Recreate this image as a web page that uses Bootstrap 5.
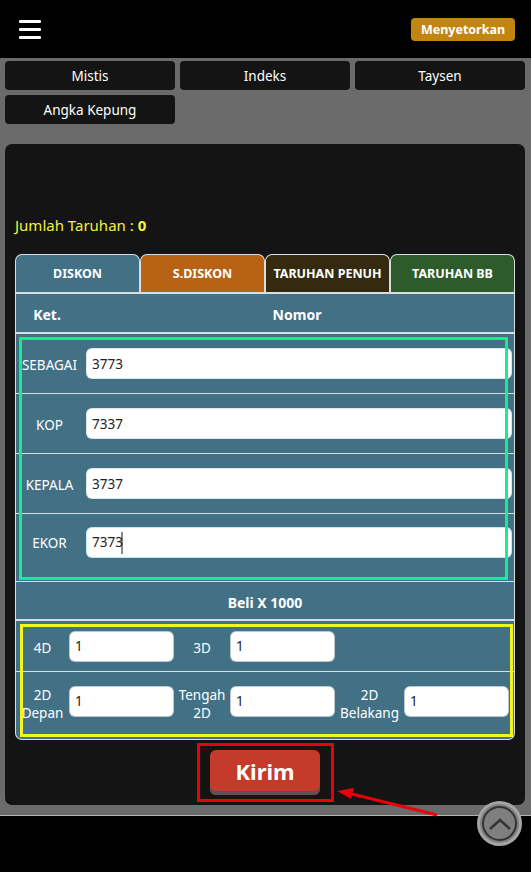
<!DOCTYPE html>
<html lang="id">
<head>
<meta charset="utf-8">
<title>Kirim</title>
<link href="https://cdn.jsdelivr.net/npm/bootstrap@5.3.0/dist/css/bootstrap.min.css" rel="stylesheet">
<style>
html,body{height:872px;overflow:hidden}
body{background:#000;font-family:"Noto Sans","Open Sans","Liberation Sans",sans-serif;font-size:14px;color:#fff;position:relative}
.top-bar{height:58px;background:#000;padding:0 16px 0 19px}
.burger{width:22px;display:flex;flex-direction:column;gap:5px;padding:0;border:0;background:none}
.burger span{display:block;height:3px;background:#fff;border-radius:1px}
.depo{background:#c1860f;color:#fff;font-size:12.5px;font-weight:700;line-height:23px;height:23px;width:104px;padding:0;border-radius:4px;border:0}
.stage{height:758px;background:#6b6b6b;border-bottom:1px solid #b5b5b5;padding:3px 6px 0 5px}
.game-grid{display:grid;grid-template-columns:repeat(3,170px);column-gap:5px;row-gap:5px}
.game-btn{background:#141414;color:#fff;height:29px;line-height:31px;border-radius:4px;text-align:center;font-size:13.5px;border:0;padding:0}
.panel{margin-top:20px;background:#141414;border-radius:7px;height:661px;padding:69px 10px 0 10px}
.total{color:#f2f23c;font-size:15px;line-height:24px;height:41px;margin-bottom:0}
.sheet{width:500px;background:#427186;border:1px solid #d8dee2;border-top:0;border-radius:0 0 7px 7px}
.tab-row{display:grid;grid-template-columns:repeat(4,1fr);height:40px;margin:0 -1px;background:#141414}
.tab-cell{display:flex;align-items:center;justify-content:center;font-size:12.5px;font-weight:700;border:1px solid #d8dee2;border-bottom:2px solid #d8dee2;border-radius:7px 7px 0 0;padding-top:2px;white-space:nowrap}
.t-a{background:#427186}.t-b{background:#b86216}.t-c{background:#352a10}.t-d{background:#2d5c2a}
.line-head{height:40px;display:flex;align-items:center;font-weight:700;font-size:14px;border-bottom:2px solid #d8dee2;padding-top:3px}
.line-head .lbl{width:62px;text-align:center}
.line-head .mid{flex:1;text-align:center;padding-left:2px}
.num-row{height:60px;display:flex;align-items:center;border-bottom:1px solid #d8dee2}
.num-row.last{height:68px;padding-bottom:11px}
.num-row .lbl{width:67px;margin-right:4px;padding-top:3px;text-align:center;font-size:13.5px;flex:none}
.field{background:#fff;color:#222;border:0;border-radius:5px;height:29px;width:424px;padding:0 5px;font-size:13.5px;font-family:inherit;outline:0;box-shadow:0 0 0 1px #dfe6e9}
.caret-bar{box-shadow:0 0 0 1px #bfeaf5}
.buy-title{height:39px;display:flex;align-items:center;justify-content:center;font-weight:700;font-size:14px;border-bottom:2px solid #d8dee2;padding-top:3px}
.buy-row{display:grid;grid-template-columns:53px 105px 56px 105px 69px 105px;align-items:center}
.buy-row.one{height:51px;border-bottom:1px solid #d8dee2}
.buy-row.two{height:67px;padding-bottom:9px}
.buy-row .lbl{text-align:center;line-height:18px;font-size:13.5px;white-space:nowrap;padding-top:3px}
.buy-row.two .lbl{padding-top:5px}
.buy-row .field{width:103px;margin-left:1px;box-shadow:0 0 0 1px #bcc8ce}
.send-wrap{text-align:center;padding-top:10px}
.send{display:inline-block;background:#c43b2c;color:#fff;font-weight:700;font-size:22px;line-height:40px;width:110px;height:45px;border:0;border-radius:6px;box-shadow:inset 0 -4px 0 #555;padding:0 0 4px}
.marks{position:absolute;left:0;top:0;width:531px;height:872px;pointer-events:none}
.go-top{position:absolute;left:477px;top:801px;width:45px;height:45px;border-radius:50%;background:#7f7f7f;border:3px solid #a5a5a5;display:flex;align-items:center;justify-content:center}
.go-top i{display:flex;width:35px;height:35px;border-radius:50%;border:2px solid #333;align-items:center;justify-content:center}
</style>
</head>
<body>
<nav class="top-bar d-flex align-items-center justify-content-between">
  <button class="burger" aria-label="Menu"><span></span><span></span><span></span></button>
  <button class="depo">Menyetorkan</button>
</nav>
<main class="stage">
  <div class="game-grid">
    <div class="game-btn">Mistis</div>
    <div class="game-btn">Indeks</div>
    <div class="game-btn">Taysen</div>
    <div class="game-btn">Angka Kepung</div>
  </div>
  <section class="panel">
    <p class="total">Jumlah Taruhan : <b>0</b></p>
    <div class="sheet">
      <div class="tab-row">
        <div class="tab-cell t-a">DISKON</div>
        <div class="tab-cell t-b">S.DISKON</div>
        <div class="tab-cell t-c">TARUHAN PENUH</div>
        <div class="tab-cell t-d">TARUHAN BB</div>
      </div>
      <div class="line-head"><div class="lbl">Ket.</div><div class="mid">Nomor</div></div>
      <div class="num-row"><div class="lbl">SEBAGAI</div><input class="field" value="3773"></div>
      <div class="num-row"><div class="lbl">KOP</div><input class="field" value="7337"></div>
      <div class="num-row"><div class="lbl">KEPALA</div><input class="field" value="3737"></div>
      <div class="num-row last"><div class="lbl">EKOR</div><input class="field caret-bar" value="7373"></div>
      <div class="buy-title">Beli X 1000</div>
      <div class="buy-row one">
        <div class="lbl">4D</div><input class="field" value="1">
        <div class="lbl">3D</div><input class="field" value="1">
      </div>
      <div class="buy-row two">
        <div class="lbl">2D<br>Depan</div><input class="field" value="1">
        <div class="lbl">Tengah<br>2D</div><input class="field" value="1">
        <div class="lbl">2D<br>Belakang</div><input class="field" value="1">
      </div>
    </div>
    <div class="send-wrap"><button class="send">Kirim</button></div>
  </section>
</main>
<div class="go-top"><i><svg width="24" height="14" viewBox="0 0 24 14"><path d="M2 12 L12 3 L22 12" fill="none" stroke="#333" stroke-width="2.5"/></svg></i></div>
<svg class="marks" viewBox="0 0 531 872">
  <rect x="20.5" y="338.5" width="486" height="240" fill="none" stroke="#10f090" stroke-width="3"/>
  <rect x="21.5" y="625.5" width="490" height="110" fill="none" stroke="#f5f51e" stroke-width="3"/>
  <rect x="198.5" y="744.5" width="134" height="56" fill="none" stroke="#e8000b" stroke-width="3"/>
  <path d="M437 815 L352 794" stroke="#e8000b" stroke-width="3" fill="none"/>
  <path d="M337 791 L354 788 L351 799 Z" fill="#e8000b"/>
  <path d="M122 532 V554" stroke="#111" stroke-width="1"/>
</svg>
</body>
</html>
